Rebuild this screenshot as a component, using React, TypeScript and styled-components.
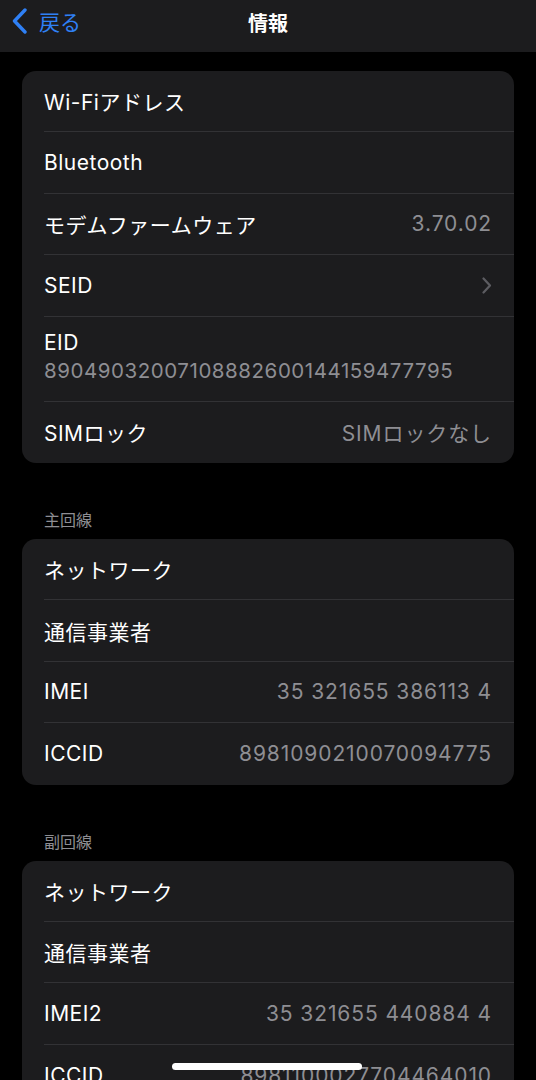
import styled, { createGlobalStyle } from "styled-components";

const GlobalStyle = createGlobalStyle`
  html, body {
    margin: 0;
    padding: 0;
    background: #000;
    overflow: hidden;
  }
  body {
    font-family: Inter, "Noto Sans CJK JP", sans-serif;
    -webkit-font-smoothing: antialiased;
  }
`;

type Item = { label: string; value?: string; chevron?: boolean; sub?: string };

const main: Item[] = [
  { label: "Wi-Fiアドレス" },
  { label: "Bluetooth" },
  { label: "モデムファームウェア", value: "3.70.02" },
  { label: "SEID", chevron: true },
  { label: "EID", sub: "89049032007108882600144159477795" },
  { label: "SIMロック", value: "SIMロックなし" },
];

const line1: Item[] = [
  { label: "ネットワーク" },
  { label: "通信事業者" },
  { label: "IMEI", value: "35 321655 386113 4" },
  { label: "ICCID", value: "8981090210070094775" },
];

const line2: Item[] = [
  { label: "ネットワーク" },
  { label: "通信事業者" },
  { label: "IMEI2", value: "35 321655 440884 4" },
  { label: "ICCID", value: "8981100027704464010" },
];

const Chevron = () => (
  <svg width="10" height="17" viewBox="0 0 10 17" fill="none">
    <path d="M1.5 1.5L8 8.5L1.5 15.5" stroke="#5c5c61" strokeWidth="2.2" strokeLinecap="round" strokeLinejoin="round" />
  </svg>
);

const BackChevron = () => (
  <svg width="17" height="26" viewBox="0 0 17 26" fill="none">
    <path d="M14 2L3.5 13L14 24" stroke="#2f80f5" strokeWidth="3.4" strokeLinecap="round" strokeLinejoin="round" />
  </svg>
);

const Group = ({ items }: { items: Item[] }) => (
  <Card>
    {items.map((it, i) => (
      <Row key={i}>
        <RowInner $last={i === items.length - 1} $tall={!!it.sub}>
          {it.sub ? (
            <Stack>
              <Label>{it.label}</Label>
              <Sub>{it.sub}</Sub>
            </Stack>
          ) : (
            <>
              <Label>{it.label}</Label>
              {it.value && <Value>{it.value}</Value>}
              {it.chevron && <Chevron />}
            </>
          )}
        </RowInner>
      </Row>
    ))}
  </Card>
);

const App = () => {
  return (
    <Screen>
      <GlobalStyle />
      <NavBar>
        <Back>
          <BackChevron />
          <BackText>戻る</BackText>
        </Back>
        <Title>情報</Title>
      </NavBar>
      <Content>
        <Group items={main} />
        <SectionHeader>主回線</SectionHeader>
        <Group items={line1} />
        <SectionHeader>副回線</SectionHeader>
        <Group items={line2} />
      </Content>
      <HomeIndicator />
    </Screen>
  );
};

export default App;

const Screen = styled.div`
  position: relative;
  width: 536px;
  height: 1080px;
  background: #000;
  overflow: hidden;
`;

const NavBar = styled.div`
  position: relative;
  height: 52px;
  background: #1c1c1e;
  display: flex;
  align-items: center;
  justify-content: center;
`;

const Back = styled.div`
  position: absolute;
  left: 11px;
  top: 8px;
  display: flex;
  align-items: center;
  gap: 11px;
`;

const BackText = styled.span`
  color: #2f80f5;
  font-size: 21px;
  line-height: 26px;
  font-family: "Noto Sans CJK JP", sans-serif;
`;

const Title = styled.div`
  color: #fff;
  font-size: 20px;
  font-weight: 700;
  font-family: "Noto Sans CJK JP", sans-serif;
  margin-top: -8px;
`;

const Content = styled.div`
  padding: 19px 22px 0;
`;

const Card = styled.div`
  background: #1c1c1e;
  border-radius: 14px;
  overflow: hidden;
`;

const Row = styled.div`
  padding-left: 22px;
`;

const RowInner = styled.div<{ $last: boolean; $tall: boolean }>`
  height: ${(p) => (p.$tall ? "85px" : "61.4px")};
  box-sizing: border-box;
  display: flex;
  align-items: center;
  justify-content: space-between;
  padding-right: 22px;
  border-bottom: ${(p) => (p.$last ? "none" : "1px solid #323235")};
`;

const Stack = styled.div`
  display: flex;
  flex-direction: column;
  gap: 3px;
  margin-top: -4px;
`;

const Label = styled.span`
  color: #fff;
  font-size: 21px;
  letter-spacing: 0.5px;
`;

const Value = styled.span`
  color: #8e8e93;
  font-size: 21px;
  letter-spacing: 0.9px;
`;

const Sub = styled.span`
  color: #8e8e93;
  font-size: 20.5px;
  letter-spacing: 0.55px;
`;

const SectionHeader = styled.div`
  color: #8e8e93;
  font-size: 16px;
  padding: 45px 22px 9px;
  line-height: 22px;
  font-family: "Noto Sans CJK JP", sans-serif;
`;

const HomeIndicator = styled.div`
  position: absolute;
  left: 172px;
  top: 1063px;
  width: 190px;
  height: 7px;
  border-radius: 4px;
  background: #fff;
`;
